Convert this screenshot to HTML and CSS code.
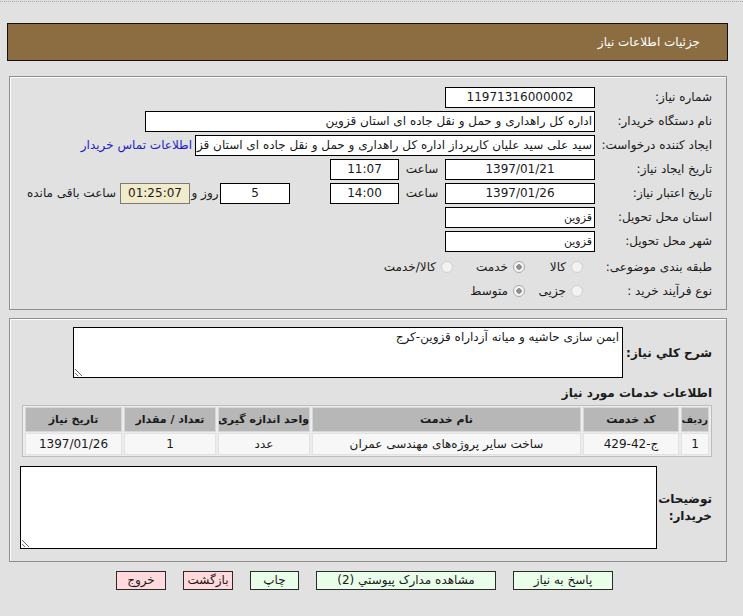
FILE: index.html
```html
<!DOCTYPE html>
<html lang="fa" dir="rtl">
<head>
<meta charset="utf-8">
<title>جزئیات اطلاعات نیاز</title>
<link rel="stylesheet" href="styles.css">
</head>
<body>
<div class="topline"></div>
<div class="header">جزئیات اطلاعات نیاز</div>

<div class="panel panel-info">
  <div class="row">
    <span class="lbl">شماره نیاز:</span>
    <span class="box w150 center">11971316000002</span>
  </div>
  <div class="row">
    <span class="lbl">نام دستگاه خریدار:</span>
    <span class="box w450">اداره کل راهداری و حمل و نقل جاده ای استان قزوین</span>
  </div>
  <div class="row">
    <span class="lbl">ایجاد کننده درخواست:</span>
    <span class="box w400">سید علی سید علیان کارپرداز اداره کل راهداری و حمل و نقل جاده ای استان قزوین</span>
    <a class="link" href="#">اطلاعات تماس خریدار</a>
  </div>
  <div class="row">
    <span class="lbl">تاریخ ایجاد نیاز:</span>
    <span class="box w150 center">1397/01/21</span>
    <span class="mid w46">ساعت</span>
    <span class="box w69 center">11:07</span>
  </div>
  <div class="row">
    <span class="lbl">تاریخ اعتبار نیاز:</span>
    <span class="box w150 center">1397/01/26</span>
    <span class="mid w46">ساعت</span>
    <span class="box w69 center">14:00</span>
    <span class="box w70 center gap40">5</span>
    <span class="mid w30">روز و</span>
    <span class="box w70 center remain">01:25:07</span>
    <span class="after">ساعت باقی مانده</span>
  </div>
  <div class="row">
    <span class="lbl">استان محل تحویل:</span>
    <span class="box w150 small">قزوین</span>
  </div>
  <div class="row">
    <span class="lbl">شهر محل تحویل:</span>
    <span class="box w150 small">قزوین</span>
  </div>
  <div class="row row-radio first-radio">
    <span class="lbl">طبقه بندی موضوعی:</span>
    <div class="radios">
      <span class="opt w58"><span class="radio"></span>کالا</span>
      <span class="opt w72"><span class="radio on"></span>خدمت</span>
      <span class="opt"><span class="radio"></span>کالا/خدمت</span>
    </div>
  </div>
  <div class="row row-radio">
    <span class="lbl">نوع فرآیند خرید :</span>
    <div class="radios">
      <span class="opt w58"><span class="radio"></span>جزیی</span>
      <span class="opt"><span class="radio on"></span>متوسط</span>
    </div>
  </div>
</div>

<div class="panel panel-desc">
  <div class="desc-row">
    <span class="blbl desc-lbl">شرح کلي نیاز:</span>
    <textarea class="ta ta-desc" readonly>ایمن سازی حاشیه و میانه آزداراه قزوین-کرج</textarea>
  </div>
  <div class="heading">اطلاعات خدمات مورد نیاز</div>
  <table class="grid">
    <colgroup>
      <col class="c1"><col class="c2"><col class="c3"><col class="c4"><col class="c5"><col class="c6">
    </colgroup>
    <thead>
      <tr>
        <th class="th-narrow">ردیف</th>
        <th>کد خدمت</th>
        <th>نام خدمت</th>
        <th>واحد اندازه گیری</th>
        <th>تعداد / مقدار</th>
        <th>تاریخ نیاز</th>
      </tr>
    </thead>
    <tbody>
      <tr>
        <td>1</td>
        <td>ج-42-429</td>
        <td>ساخت سایر پروژه‌های مهندسی عمران</td>
        <td>عدد</td>
        <td>1</td>
        <td>1397/01/26</td>
      </tr>
    </tbody>
  </table>
  <div class="note-row">
    <span class="blbl note-lbl">توضیحات خریدار:</span>
    <textarea class="ta ta-note" readonly></textarea>
  </div>
</div>

<div class="buttons">
  <button class="btn green w100">پاسخ به نیاز</button>
  <button class="btn green w180">مشاهده مدارک پیوستي (2)</button>
  <button class="btn green w49">چاپ</button>
  <button class="btn pink w50">بازگشت</button>
  <button class="btn pink w50">خروج</button>
</div>
</body>
</html>
```

FILE: styles.css
```css
* { box-sizing: border-box; }

body {
  margin: 0;
  background: #e1e1e1;
  font-family: "DejaVu Sans", sans-serif;
  font-size: 12px;
  color: #1a1a1a;
  direction: rtl;
}

.topline {
  height: 2px;
  border-top: 1px dotted #a8a8a8;
  margin-top: 1px;
}

.header {
  margin: 20px 15px 0 7px;
  height: 38px;
  line-height: 36px;
  background: #8c6d42;
  border: 1px solid #111;
  color: #fff;
  padding-right: 27px;
  font-size: 12px;
}

.panel {
  margin: 15px 16px 0 9px;
  border: 1px solid #8e8e8e;
  box-shadow: inset 1px 1px 0 #fff;
}

.panel-info {
  height: 234px;
  padding: 8px 14px 0 0;
}

.row {
  display: flex;
  align-items: center;
  height: 24px;
}

.lbl {
  width: 117px;
  flex: none;
  white-space: nowrap;
}

.box {
  flex: none;
  height: 21px;
  line-height: 19px;
  background: #fff;
  border: 1px solid #000;
  padding: 0 2px;
  white-space: nowrap;
  overflow: hidden;
  font-size: 12px;
}

.box.small { font-size: 11px; }
.center { text-align: center; }

.w150 { width: 150px; }
.w450 { width: 450px; }
.w400 { width: 400px; }
.w69 { width: 69px; }
.w70 { width: 70px; }
.w46 { width: 46px; }
.w30 { width: 30px; }

.mid {
  flex: none;
  text-align: center;
  white-space: nowrap;
}

.gap40 { margin-right: 40px; }

.remain {
  background: #f1ebcb;
  border-color: #7a7a7a;
}

.after {
  margin-right: 4px;
  white-space: nowrap;
}

.link {
  margin-right: 3px;
  color: #1c1cc8;
  text-decoration: none;
  white-space: nowrap;
}

.first-radio { margin-top: 2px; }
.row-radio { height: 24px; }

.radios {
  display: flex;
  align-items: center;
  margin-right: 12px;
}

.opt {
  display: inline-flex;
  align-items: center;
  white-space: nowrap;
}

.w58 { width: 58px; }
.w72 { width: 72px; }

.radio {
  width: 12px;
  height: 12px;
  border-radius: 50%;
  border: 1px solid #cfcfcf;
  background: #f3f3f3;
  margin-left: 5px;
  flex: none;
}

.radio.on {
  border-color: #a9a9a9;
  background: radial-gradient(circle, #8e8e8e 0 2.5px, #f6f6f6 3px);
}

.panel-desc {
  margin-top: 8px;
  height: 244px;
  padding: 8px 14px 0 0;
}

.blbl {
  font-weight: bold;
  font-size: 12px;
}

.desc-row {
  display: flex;
  align-items: center;
}

.desc-lbl {
  width: 89px;
  flex: none;
  white-space: nowrap;
}

.ta {
  display: block;
  background: #fff;
  border: 1px solid #000;
  font-family: "DejaVu Sans", sans-serif;
  font-size: 12px;
  color: #1a1a1a;
  padding: 2px 3px;
  resize: both;
  direction: rtl;
  outline: none;
}

.ta-desc {
  width: 550px;
  height: 51px;
}

.heading {
  font-weight: bold;
  font-size: 12px;
  margin-top: 7px;
  height: 17px;
  line-height: 17px;
}

.grid {
  margin-top: 3px;
  width: 690px;
  table-layout: fixed;
  border-collapse: separate;
  border-spacing: 2px 1px;
  border: 1px solid #bdbdbd;
  background: #ececec;
  font-size: 11px;
}

.grid th {
  background: #b7b7b7;
  height: 25px;
  font-weight: bold;
  text-align: center;
  padding: 0;
  border: 1px solid #d6d6d6;
  white-space: nowrap;
  overflow: hidden;
}

.grid th.th-narrow {
  font-size: 10px;
}

.grid td {
  background: #f7f7f7;
  height: 22px;
  text-align: center;
  padding: 0;
  border: 1px solid #e2e2e2;
  white-space: nowrap;
  font-size: 12px;
}

.c1 { width: 28px; }
.c2 { width: 96px; }
.c3 { width: 269px; }
.c4 { width: 92px; }
.c5 { width: 92px; }
.c6 { width: 97px; }

.note-row {
  display: flex;
  align-items: center;
  margin-top: 9px;
}

.note-lbl {
  width: 55px;
  flex: none;
  line-height: 17px;
}

.ta-note {
  width: 637px;
  height: 83px;
}

.buttons {
  display: flex;
  gap: 17px;
  margin: 9px 130px 0 0;
}

.btn {
  height: 19px;
  border: 1px solid #2a2a2a;
  font-family: "DejaVu Sans", sans-serif;
  font-size: 12px;
  color: #1a1a1a;
  padding: 0;
  line-height: 17px;
}

.green { background: #eaffea; }
.pink { background: #ffd9dc; }

.w100 { width: 100px; }
.w180 { width: 180px; }
.w49 { width: 49px; }
.w50 { width: 50px; }
```
